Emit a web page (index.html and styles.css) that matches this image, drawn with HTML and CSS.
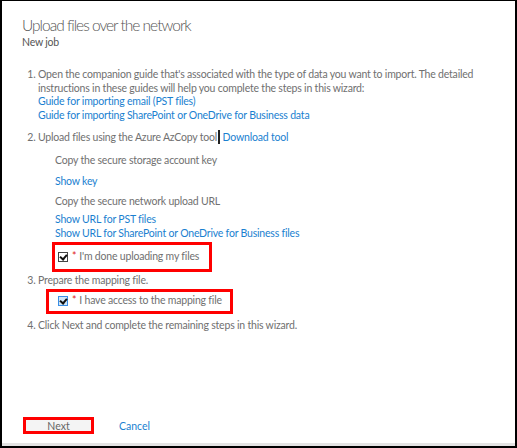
FILE: index.html
```html
<!DOCTYPE html>
<html lang="en">
<head>
    <meta charset="UTF-8">
    <meta name="viewport" content="width=device-width, initial-scale=1.0">
    <title>Upload files over the network</title>
    <link rel="stylesheet" href="styles.css">
</head>
<body>
    <div class="frame">
        <div class="dialog">
            <h1>Upload files over the network</h1>
            <div class="subtitle">New job</div>

            <ol class="steps">
                <li>
                    Open the companion guide that's associated with the type of data you want to import. The detailed instructions in these guides will help you complete the steps in this wizard:
                    <a href="#">Guide for importing email (PST files)</a>
                    <a href="#">Guide for importing SharePoint or OneDrive for Business data</a>
                </li>
                <li class="tight">
                    Upload files using the Azure AzCopy tool<span class="caret"></span> <a href="#" class="inline">Download tool</a>
                    <div class="sub">
                        <p class="gap">Copy the secure storage account key</p>
                        <a href="#" class="gap">Show key</a>
                        <p>Copy the secure network upload URL</p>
                        <a href="#">Show URL for PST files</a>
                        <a href="#">Show URL for SharePoint or OneDrive for Business files</a>
                    </div>
                    <label class="check check-one">
                        <span class="box"></span><span class="req">*</span><span>I'm done uploading my files</span>
                    </label>
                </li>
                <li class="mid">
                    Prepare the mapping file.
                    <label class="check check-two">
                        <span class="box focus"></span><span class="req">*</span><span>I have access to the mapping file</span>
                    </label>
                </li>
                <li>Click Next and complete the remaining steps in this wizard.</li>
            </ol>

            <div class="actions">
                <button class="next">Next</button>
                <a href="#" class="cancel">Cancel</a>
            </div>
        </div>
    </div>
</body>
</html>
```

FILE: styles.css
```css
body { margin: 0; font-family: Lato, "Open Sans", sans-serif; color: #707070; background: #fff; }
.frame { width: 517px; height: 448px; box-sizing: border-box; border: 2px solid #000; border-top-width: 1px; }
.dialog { height: 100%; box-sizing: border-box; border-bottom: 3px solid #e3e3e3; padding: 14px 0 0 20px; display: flex; flex-direction: column; }

h1 { margin: 0; font-size: 15.5px; font-weight: 300; letter-spacing: -1px; color: #555; line-height: 20px; }
.subtitle { font-size: 10.5px; letter-spacing: -0.2px; color: #555; line-height: 14px; }

a { color: #1a7fd0; text-decoration: none; }
.steps { margin: 19px 0 0; padding: 0 0 0 16px; font-size: 10.5px; letter-spacing: -0.2px; line-height: 13.7px; width: 460px; }
.steps li { margin-bottom: 7px; }
.steps li.tight { margin-bottom: 2px; }
.steps li.mid { margin-bottom: 5px; }
.steps li a { display: block; }
.steps li a.inline { display: inline; }
.caret { display: inline-block; width: 2px; height: 14px; background: #222; vertical-align: -3px; margin-left: 1px; }

.sub { padding: 9.5px 0 0 17px; }
.sub p { margin: 0 0 4px; }
.sub .gap { margin-bottom: 7px; }

.check { display: flex; align-items: center; box-sizing: border-box; border: 3px solid #f00; white-space: nowrap; }
.check-one { width: 160px; height: 30px; margin: 1px 0 0 14px; padding-left: 3px; }
.check-two { width: 187px; height: 25px; margin: 1.5px 0 0 8px; padding-left: 9px; }
.box { width: 8px; height: 8px; border: 1px solid #444; position: relative; margin-right: 4px; background: #fff; }
.box::after { content: ""; position: absolute; left: 2px; top: 0; width: 3px; height: 5px; border: solid #111; border-width: 0 2px 2px 0; transform: rotate(40deg); }
.box.focus { background: #cfe6f8; border-color: #3a8ee6; }
.req { color: #e02020; margin-right: 3px; }

.actions { margin-top: auto; margin-bottom: 9px; display: flex; align-items: center; }
.next { width: 71px; height: 17px; box-sizing: border-box; border: 3px solid #f00; background: #f4f4f4; color: #666; font: 10.5px Lato, sans-serif; padding: 0; margin-left: 1px; line-height: 10px; }
.cancel { font-size: 10.5px; margin-left: 25px; }
```
